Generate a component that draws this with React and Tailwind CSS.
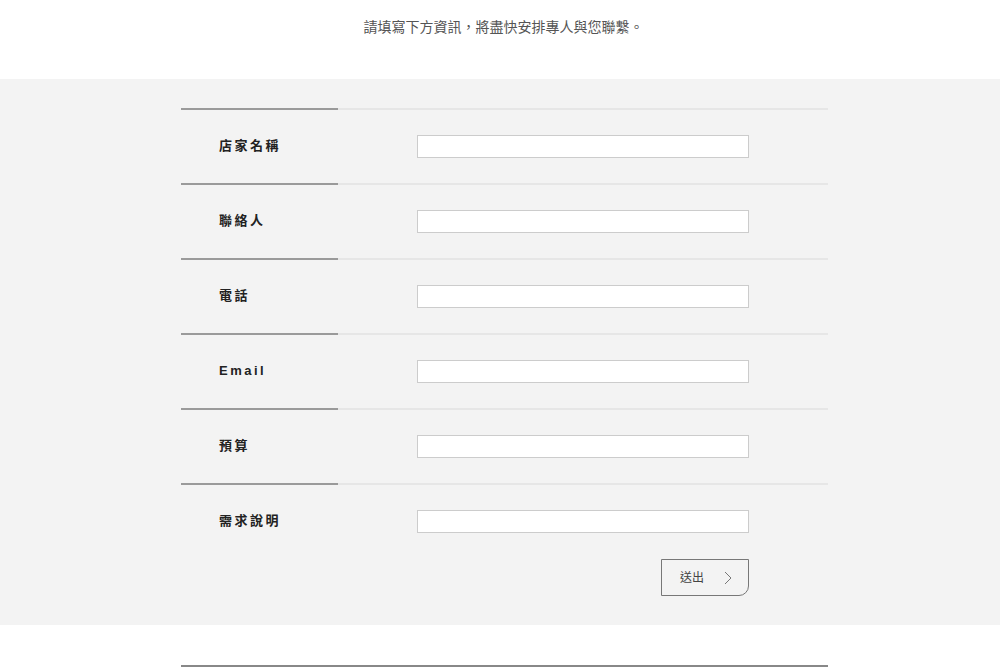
const FIELDS = ['店家名稱', '聯絡人', '電話', 'Email', '預算', '需求說明']

const FONT = { fontFamily: '"Liberation Sans", "Noto Sans CJK TC", sans-serif' }
const CJK = { fontFamily: '"Noto Sans CJK TC", sans-serif' }

function Row({ label }) {
  return (
    <div className="flex h-[75px]">
      <div className="w-[236px] flex flex-col">
        <div className="flex h-[2px]">
          <div className="w-[157px] bg-[#9a9a9a]" />
          <div className="flex-1 bg-[#e6e6e6]" />
        </div>
        <div className="flex-1 flex items-center pl-[38px] pb-[1px] text-[13px] font-bold tracking-[2.5px] text-[#222]">
          {label}
        </div>
      </div>
      <div className="flex-1 flex flex-col">
        <div className="h-[2px] bg-[#e6e6e6]" />
        <div className="flex-1 flex items-center">
          <input
            type="text"
            className="w-[332px] h-[23px] bg-white border border-[#cccccc] outline-none"
          />
        </div>
      </div>
    </div>
  )
}

export default function App() {
  return (
    <div lang="zh-Hant-TW" className="min-h-[667px] bg-white" style={FONT}>
      <div className="h-[79px] pt-[16px] pl-[7px] text-center text-[14px] text-[#555]" style={CJK}>
        請填寫下方資訊，將盡快安排專人與您聯繫。
      </div>
      <div className="bg-[#f3f3f3] pt-[29px] pb-[29px]">
        <div className="ml-[181px] w-[647px]">
          {FIELDS.map((f) => (
            <Row key={f} label={f} />
          ))}
          <div className="flex justify-start pl-[480px] mt-[1px]">
            <button
              type="button"
              className="w-[88px] h-[37px] border border-[#777] rounded-br-[10px] flex items-center justify-between pl-[18px] pr-[16px] text-[12px] text-[#444]"
            >
              <span>送出</span>
              <svg width="8" height="14" viewBox="0 0 8 14" fill="none" stroke="#777" strokeWidth="1">
                <path d="M1 1l6 6-6 6" />
              </svg>
            </button>
          </div>
        </div>
      </div>
      <div className="ml-[181px] w-[647px] mt-[40px] h-[2px] bg-[#888]" />
    </div>
  )
}
